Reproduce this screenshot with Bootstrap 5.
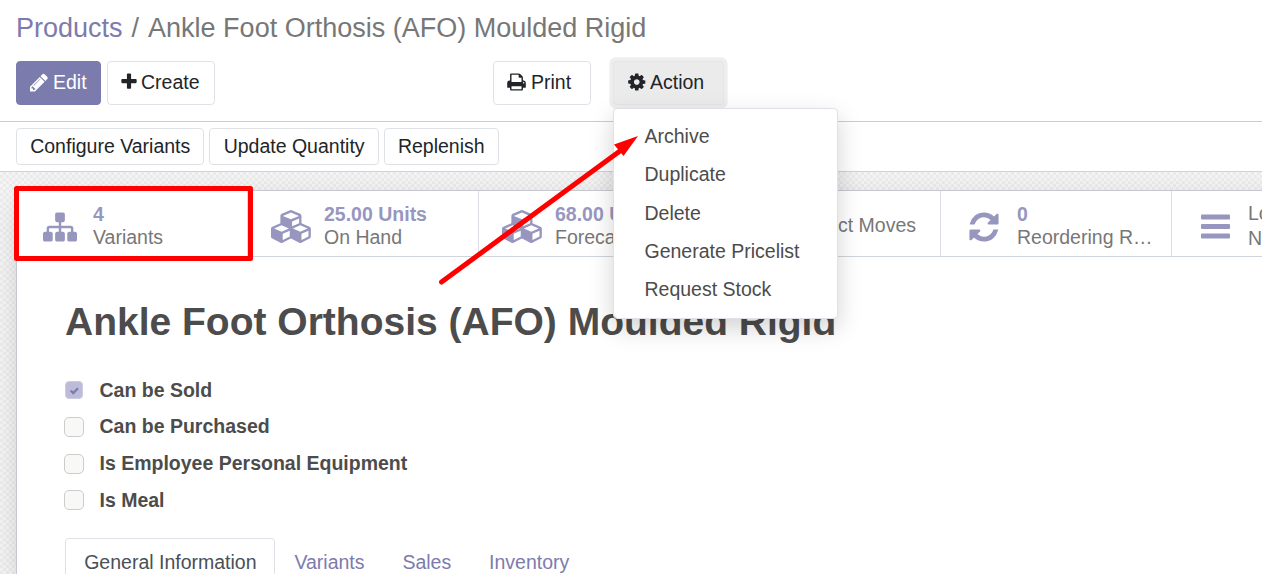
<!DOCTYPE html>
<html lang="en">
<head>
<meta charset="utf-8">
<meta name="viewport" content="width=device-width, initial-scale=1">
<title>Ankle Foot Orthosis (AFO) Moulded Rigid</title>
<link href="https://cdn.jsdelivr.net/npm/bootstrap@5.3.0/dist/css/bootstrap.min.css" rel="stylesheet">
<style>
html,body{height:100%}
body{font-family:"Liberation Sans",Arial,sans-serif;font-size:19.5px;line-height:1.5;color:#4c4c4c;background:#fff;overflow:hidden}
a{text-decoration:none}
.fa{fill:currentColor;flex:none;display:block}
.control-panel{height:122px;border-bottom:1px solid #c9ccd2;padding:8px 16px 0}
.crumbs{font-size:27px;line-height:40px;color:#777;white-space:nowrap}
.crumbs a{color:#7c7bad}
.crumbs .slash{padding:0 9px}
.panel-buttons{padding-top:13px}
.left-buttons{width:477px;gap:6px}
.right-buttons{gap:22px}
.btn{--bs-btn-font-size:19.5px;--bs-btn-line-height:29px;--bs-btn-border-radius:4px;--bs-btn-padding-x:13px;--bs-btn-padding-y:0;white-space:nowrap}
.btn-main{height:44px;display:flex;align-items:center;gap:5px;padding-bottom:2px}
.btn-plain{--bs-btn-color:#212529;--bs-btn-border-color:#dee2e6;--bs-btn-bg:#fff}
.btn-edit{--bs-btn-color:#fff;--bs-btn-bg:#7c7bad;--bs-btn-border-color:#7c7bad;width:85px}
.btn-create{width:108px;gap:4px}
.btn-print{width:98px}
.action-btn{--bs-btn-color:#212529;width:111px;padding-left:14px;gap:4.5px;border-radius:3px;background:#ebebeb;border:1px solid #e5e5e5;box-shadow:0 0 0 3.7px #eee}
.statusbar{height:50px;gap:5px;border-bottom:1px solid #cfd2d6;padding:6px 16px 0}
.statusbar .btn{height:37px;padding:0 13.2px 1px}
.form-bg{height:402px;padding:18px 0 0 16px;
 background:repeating-conic-gradient(#ebebeb 0 25%,#f4f4f4 0 50%) 0 0/6px 6px}
.sheet{width:1500px;height:400px;background:#fff;border:1px solid #c8c8d3;box-shadow:0 7px 30px -10px rgba(0,0,0,.25)}
.stats{height:66px;border-bottom:1px solid #d0d5db}
.stat{width:231px;flex:none;border-right:1px solid #dadde3;color:#777;line-height:23px;white-space:nowrap}
.stat .icon-cell{width:76px;padding-left:10px;flex:none;color:#9796bf;display:flex;justify-content:center;padding-top:6px}
.stat b{color:#9796bf;display:block}
.stat .label-cell{padding-top:5px;width:137px;overflow:hidden;text-overflow:ellipsis}
.stat .label-single{padding-top:3px}
.stat .label-wide{line-height:25px;padding-top:4px}
.title-main{font-size:39px;font-weight:700;line-height:58px;margin:36px 0 0 48px;color:#4c4c4c;white-space:nowrap}
.checks{margin:21px 0 0 47px}
.check-row{height:36.7px;font-weight:700;gap:15.5px}
.check-row .form-check-input{width:20px;height:20px;margin:0;border:1.5px solid #ccc;border-radius:5px;background-color:#f8f8f7;opacity:1;box-shadow:none;flex:none}
.check-row .form-check-input:checked{width:18px;height:18px;margin:0 1px;border:1px solid #cdcce0;background-color:#bdbcd8;border-radius:4px;background-size:15px;
 background-image:url("data:image/svg+xml,%3Csvg xmlns='http://www.w3.org/2000/svg' viewBox='0 0 15 15'%3E%3Cpath d='M3.700 7.500l2.600 2.600 4.700-4.900' fill='none' stroke='%237c7bad' stroke-width='2.300'/%3E%3C/svg%3E")}
.form-tabs{margin:19px 0 0 48px;border:0}
.form-tabs .nav-link{padding:9px 17.7px 8px 18.2px;color:#7c7bad;border-radius:4px 4px 0 0;border:1px solid transparent;margin:0}
.form-tabs .nav-link.active{color:#495057;border-color:#dee2e6}
.action-menu{left:613px;top:108px;width:225px;height:211px;padding:7.7px 0;border:1px solid #dfe1e6;border-radius:4px;box-shadow:0 9px 24px rgba(0,0,0,.175);--bs-dropdown-min-width:0}
.action-menu .dropdown-item{font-size:19.5px;line-height:38.4px;padding:0 30.5px;color:#4c4c4c}
.mark-layer{left:0;top:0;z-index:1100;pointer-events:none}
</style>
</head>
<body class="position-relative">
<header class="control-panel">
  <div class="crumbs d-flex"><a href="#">Products</a><span class="slash">/</span><span class="crumb-now">Ankle Foot Orthosis (AFO) Moulded Rigid</span></div>
  <div class="row g-0 panel-buttons">
    <div class="col-auto d-flex left-buttons">
      <button class="btn btn-edit btn-main"><svg class="fa" width="18" height="19.5" viewBox="128 0 1536 1664"><path d="M491 1536l91-91-235-235-91 91v107h128v128h107zm523-928q0-22-22-22-10 0-17 7l-542 542q-7 7-7 17 0 22 22 22 10 0 17-7l542-542q7-7 7-17zm-54-192l416 416-832 832h-416v-416zm683 96q0 53-37 90l-166 166-416-416 166-165q36-38 90-38 53 0 91 38l235 234q37 39 37 91z"/></svg>Edit</button>
      <button class="btn btn-plain btn-main btn-create"><svg class="fa" width="16" height="19.5" viewBox="192 0 1408 1792"><path d="M1600 736v192q0 40-28 68t-68 28h-416v416q0 40-28 68t-68 28h-192q-40 0-68-28t-28-68v-416h-416q-40 0-68-28t-28-68v-192q0-40 28-68t68-28h416v-416q0-40 28-68t68-28h192q40 0 68 28t28 68v416h416q40 0 68 28t28 68z"/></svg>Create</button>
    </div>
    <div class="col-auto d-flex right-buttons">
      <button class="btn btn-plain btn-main btn-print"><svg class="fa" width="19" height="20" viewBox="64 0 1664 1792"><path d="M448 1536h896v-256h-896v256zm0-640h896v-384h-160q-40 0-68-28t-28-68v-160h-640v640zm1152 64q0-26-19-45t-45-19-45 19-19 45 19 45 45 19 45-19 19-45zm128 0v416q0 13-9.5 22.5t-22.5 9.5h-224v160q0 40-28 68t-68 28h-960q-40 0-68-28t-28-68v-160h-224q-13 0-22.5-9.5t-9.5-22.5v-416q0-79 56.5-135.5t135.5-56.5h64v-544q0-40 28-68t68-28h672q40 0 88 20t76 48l152 152q28 28 48 76t20 88v256h64q79 0 135.5 56.5t56.5 135.5z"/></svg>Print</button>
      <button class="btn btn-main action-btn"><svg class="fa" width="17.500" height="20" viewBox="128 0 1536 1792"><path d="M1152 896q0-106-75-181t-181-75-181 75-75 181 75 181 181 75 181-75 75-181zm512-109v222q0 12-8 23t-20 13l-185 28q-19 54-39 91 35 50 107 138 10 12 10 25t-9 23q-27 37-99 108t-94 71q-12 0-26-9l-138-108q-44 23-91 38-16 136-29 186-7 28-36 28h-222q-14 0-24.5-8.5t-11.5-21.5l-28-184q-49-16-90-37l-141 107q-10 9-25 9-14 0-25-11-126-114-165-168-7-10-7-23 0-12 8-23 15-21 51-66.5t54-70.5q-27-50-41-99l-183-27q-13-2-21-12.5t-8-23.5v-222q0-12 8-23t19-13l186-28q14-46 39-92-40-57-107-138-10-12-10-24 0-10 9-23 26-36 98.5-107.5t94.5-71.5q13 0 26 10l138 107q44-23 91-38 16-136 29-186 7-28 36-28h222q14 0 24.5 8.5t11.5 21.5l28 184q49 16 90 37l142-107q9-9 24-9 13 0 25 10 129 119 165 170 7 8 7 22 0 12-8 23-15 21-51 66.5t-54 70.5q26 50 41 98l183 28q13 2 21 12.5t8 23.5z"/></svg>Action</button>
    </div>
  </div>
</header>
<div class="statusbar d-flex">
  <button class="btn btn-plain">Configure Variants</button>
  <button class="btn btn-plain">Update Quantity</button>
  <button class="btn btn-plain">Replenish</button>
</div>
<main class="form-bg overflow-hidden">
  <div class="sheet">
    <div class="stats d-flex">
      <div class="stat d-flex align-items-center"><div class="icon-cell"><svg class="fa" width="34" height="34" viewBox="0 0 1792 1792"><path d="M1792 1248v320q0 40-28 68t-68 28h-320q-40 0-68-28t-28-68v-320q0-40 28-68t68-28h96v-192h-512v192h96q40 0 68 28t28 68v320q0 40-28 68t-68 28h-320q-40 0-68-28t-28-68v-320q0-40 28-68t68-28h96v-192h-512v192h96q40 0 68 28t28 68v320q0 40-28 68t-68 28h-320q-40 0-68-28t-28-68v-320q0-40 28-68t68-28h96v-192q0-52 38-90t90-38h512v-192h-96q-40 0-68-28t-28-68v-320q0-40 28-68t68-28h320q40 0 68 28t28 68v320q0 40-28 68t-68 28h-96v192h512q52 0 90 38t38 90v192h96q40 0 68 28t28 68z"/></svg></div><div class="label-cell"><b>4</b>Variants</div></div>
      <div class="stat d-flex align-items-center"><div class="icon-cell"><svg class="fa" width="41" height="33" viewBox="0 0 2240 1792"><path id="cubes" d="M640 1632l384-192v-314l-384 164v342zm-64-454l404-173-404-173-404 173zm1088 454l384-192v-314l-384 164v342zm-64-454l404-173-404-173-404 173zm-448-293l384-165v-266l-384 164v267zm-64-379l441-189-441-189-441 189zm1088 518v416q0 36-19 67t-52 47l-448 224q-25 14-57 14t-57-14l-448-224q-4-2-7-4-2 2-7 4l-448 224q-25 14-57 14t-57-14l-448-224q-33-16-52-47t-19-67v-416q0-38 21.5-70t56.5-48l434-186v-400q0-38 21.5-70t56.5-48l448-192q23-10 50-10t50 10l448 192q35 16 56.5 48t21.5 70v400l434 186q36 16 57 48t21 70z"/></svg></div><div class="label-cell"><b>25.00 Units</b>On Hand</div></div>
      <div class="stat d-flex align-items-center"><div class="icon-cell"><svg class="fa" width="41" height="33" viewBox="0 0 2240 1792"><use href="#cubes"/></svg></div><div class="label-cell"><b>68.00 Units</b>Forecasted</div></div>
      <div class="stat d-flex align-items-center"><div class="icon-cell"></div><div class="label-cell label-single">Product Moves</div></div>
      <div class="stat d-flex align-items-center"><div class="icon-cell"><svg class="fa" width="34" height="34" viewBox="0 0 1792 1792"><path d="M1639 1056q0 5-1 7-64 268-268 434.5t-478 166.5q-146 0-282.5-55t-243.5-157l-129 129q-19 19-45 19t-45-19-19-45v-448q0-26 19-45t45-19h448q26 0 45 19t19 45-19 45l-137 137q71 66 161 102t187 36q134 0 250-65t186-179q11-17 53-117 8-23 30-23h192q13 0 22.5 9.5t9.5 22.5zm25-800v448q0 26-19 45t-45 19h-448q-26 0-45-19t-19-45 19-45l138-138q-148-137-349-137-134 0-250 65t-186 179q-11 17-53 117-8 23-30 23h-199q-13 0-22.5-9.5t-9.5-22.5v-7q65-268 270-434.5t480-166.5q146 0 284 55.5t245 156.5l130-129q19-19 45-19t45 19 19 45z"/></svg></div><div class="label-cell"><b>0</b>Reordering Rules</div></div>
      <div class="stat d-flex align-items-center"><div class="icon-cell"><svg class="fa" width="29" height="26" viewBox="0 0 29 26"><rect y=".5" width="29" height="5" rx="1"/><rect y="10" width="29" height="5" rx="1"/><rect y="19.500" width="29" height="5" rx="1"/></svg></div><div class="label-cell label-wide">Lot/Serial<br>Numbers</div></div>
    </div>
    <h1 class="title-main">Ankle Foot Orthosis (AFO) Moulded Rigid</h1>
    <div class="checks">
      <label class="check-row d-flex align-items-center"><input class="form-check-input" type="checkbox" checked><span>Can be Sold</span></label>
      <label class="check-row d-flex align-items-center"><input class="form-check-input" type="checkbox"><span>Can be Purchased</span></label>
      <label class="check-row d-flex align-items-center"><input class="form-check-input" type="checkbox"><span>Is Employee Personal Equipment</span></label>
      <label class="check-row d-flex align-items-center"><input class="form-check-input" type="checkbox"><span>Is Meal</span></label>
    </div>
    <ul class="nav nav-tabs form-tabs flex-nowrap">
      <li class="nav-item"><a class="nav-link active" href="#">General Information</a></li>
      <li class="nav-item"><a class="nav-link" href="#">Variants</a></li>
      <li class="nav-item"><a class="nav-link" href="#">Sales</a></li>
      <li class="nav-item"><a class="nav-link" href="#">Inventory</a></li>
    </ul>
  </div>
</main>
<div class="dropdown-menu show action-menu position-absolute">
  <a class="dropdown-item" href="#">Archive</a>
  <a class="dropdown-item" href="#">Duplicate</a>
  <a class="dropdown-item" href="#">Delete</a>
  <a class="dropdown-item" href="#">Generate Pricelist</a>
  <a class="dropdown-item" href="#">Request Stock</a>
</div>
<svg class="mark-layer position-absolute" width="1262" height="574" viewBox="0 0 1262 574">
  <rect x="16.500" y="188.500" width="234" height="70" fill="none" stroke="#f00" stroke-width="5" stroke-linejoin="round"/>
  <path d="M441.500 282L622 149.500" stroke="#f00" stroke-width="5" stroke-linecap="round"/>
  <path d="M638 136L614 144.500L623.500 156Z" fill="#f00"/>
</svg>
<script src="https://cdn.jsdelivr.net/npm/bootstrap@5.3.0/dist/js/bootstrap.bundle.min.js"></script>
</body>
</html>
